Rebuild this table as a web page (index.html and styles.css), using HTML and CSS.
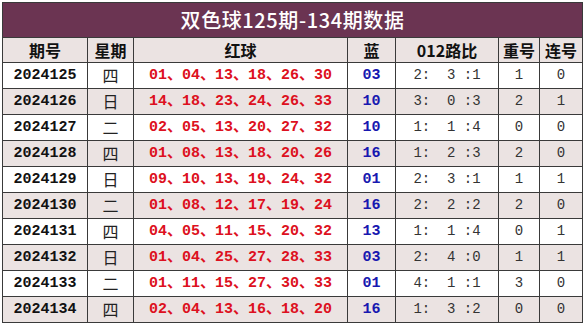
FILE: index.html
```html
<!DOCTYPE html>
<html lang="zh">
<head>
<meta charset="utf-8">
<link rel="stylesheet" href="styles.css">
</head>
<body>
<table class="tbl">
  <colgroup>
    <col class="c1"><col class="c2"><col class="c3"><col class="c4"><col class="c5"><col class="c6"><col class="c7">
  </colgroup>
  <thead>
    <tr class="title-row"><th colspan="7" class="title">双色球125期-134期数据</th></tr>
    <tr class="head-row"><th>期号</th><th>星期</th><th>红球</th><th>蓝</th><th>012路比</th><th>重号</th><th>连号</th></tr>
  </thead>
  <tbody>
    <tr><td class="no">2024125</td><td class="wk">四</td><td class="red">01、04、13、18、26、30</td><td class="blue">03</td><td class="ratio">2:&nbsp; 3 :1</td><td class="num">1</td><td class="num">0</td></tr>
    <tr class="alt"><td class="no">2024126</td><td class="wk">日</td><td class="red">14、18、23、24、26、33</td><td class="blue">10</td><td class="ratio">3:&nbsp; 0 :3</td><td class="num">2</td><td class="num">1</td></tr>
    <tr><td class="no">2024127</td><td class="wk">二</td><td class="red">02、05、13、20、27、32</td><td class="blue">10</td><td class="ratio">1:&nbsp; 1 :4</td><td class="num">0</td><td class="num">0</td></tr>
    <tr class="alt"><td class="no">2024128</td><td class="wk">四</td><td class="red">01、08、13、18、20、26</td><td class="blue">16</td><td class="ratio">1:&nbsp; 2 :3</td><td class="num">2</td><td class="num">0</td></tr>
    <tr><td class="no">2024129</td><td class="wk">日</td><td class="red">09、10、13、19、24、32</td><td class="blue">01</td><td class="ratio">2:&nbsp; 3 :1</td><td class="num">1</td><td class="num">1</td></tr>
    <tr class="alt"><td class="no">2024130</td><td class="wk">二</td><td class="red">01、08、12、17、19、24</td><td class="blue">16</td><td class="ratio">2:&nbsp; 2 :2</td><td class="num">2</td><td class="num">0</td></tr>
    <tr><td class="no">2024131</td><td class="wk">四</td><td class="red">04、05、11、15、20、32</td><td class="blue">13</td><td class="ratio">1:&nbsp; 1 :4</td><td class="num">0</td><td class="num">1</td></tr>
    <tr class="alt"><td class="no">2024132</td><td class="wk">日</td><td class="red">01、04、25、27、28、33</td><td class="blue">03</td><td class="ratio">2:&nbsp; 4 :0</td><td class="num">1</td><td class="num">1</td></tr>
    <tr><td class="no">2024133</td><td class="wk">二</td><td class="red">01、11、15、27、30、33</td><td class="blue">01</td><td class="ratio">4:&nbsp; 1 :1</td><td class="num">3</td><td class="num">0</td></tr>
    <tr class="alt"><td class="no">2024134</td><td class="wk">四</td><td class="red">02、04、13、16、18、20</td><td class="blue">16</td><td class="ratio">1:&nbsp; 3 :2</td><td class="num">0</td><td class="num">0</td></tr>
  </tbody>
</table>
</body>
</html>
```
FILE: styles.css
```css
html, body {
  margin: 0;
  padding: 0;
  background: #ffffff;
}
body {
  padding: 2px 0 0 2px;
}
.tbl {
  border-collapse: collapse;
  table-layout: fixed;
  width: 580px;
  font-family: "Noto Sans CJK SC", sans-serif;
  color: #111;
}
.c1 { width: 85px; }
.c2 { width: 46px; }
.c3 { width: 214px; }
.c4 { width: 48px; }
.c5 { width: 103px; }
.c6 { width: 41px; }
.c7 { width: 43px; }
.tbl th, .tbl td {
  border: 1px solid #3a3a3a;
  padding: 0;
  text-align: center;
  vertical-align: middle;
  white-space: nowrap;
  overflow: hidden;
}
.title-row { height: 35px; }
.title {
  background: #6b3452;
  color: #ffffff;
  font-size: 20px;
  font-weight: 500;
  font-family: "Noto Sans CJK SC", sans-serif;
  letter-spacing: 0.6px;
  line-height: 34px;
}
.head-row { height: 25px; background: #ebe3e2; }
.head-row th {
  font-size: 16px;
  font-weight: 700;
  line-height: 24px;
}
.tbl tbody tr { height: 26px; }
.tbl tbody td { line-height: 25px; }
.alt { background: #ebe3e2; }
.no {
  font-family: "Liberation Mono", monospace;
  font-weight: 700;
  font-size: 15px;
}
.wk {
  font-size: 16px;
  font-weight: 400;
  color: #222;
}
.red {
  color: #dd1020;
  font-family: "Liberation Mono", "Noto Sans CJK SC", monospace;
  font-weight: 700;
  font-size: 15px;
}
.blue {
  color: #1818b0;
  font-family: "Liberation Mono", monospace;
  font-weight: 700;
  font-size: 15px;
}
.ratio {
  font-family: "Liberation Mono", monospace;
  font-size: 14px;
  color: #333;
}
.num {
  font-family: "Liberation Mono", monospace;
  font-size: 14px;
  color: #333;
}
```
